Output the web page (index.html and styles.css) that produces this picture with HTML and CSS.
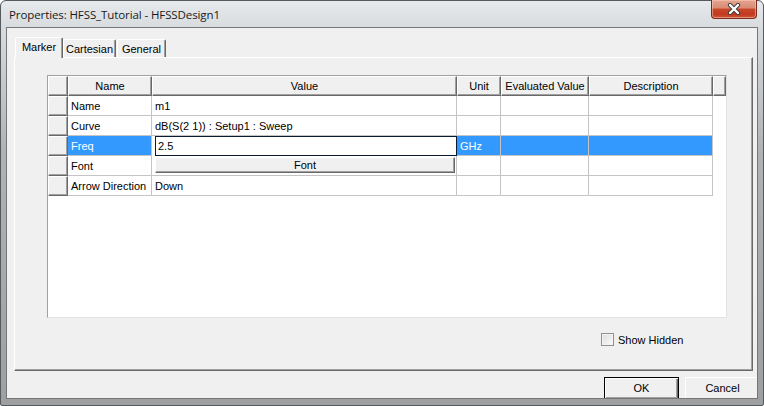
FILE: index.html
```html
<!DOCTYPE html>
<html>
<head>
<meta charset="utf-8">
<link rel="stylesheet" href="styles.css">
</head>
<body>
<div class="window">
  <div class="titlebar">
    <span class="title">Properties: HFSS_Tutorial - HFSSDesign1</span>
    <div class="close">
      <svg width="14" height="12" viewBox="0 0 14 12">
        <path d="M3 2 L11 10 M11 2 L3 10" stroke="#3a3a3a" stroke-width="4.2" stroke-linecap="round"/>
        <path d="M3 2 L11 10 M11 2 L3 10" stroke="#ffffff" stroke-width="2.4" stroke-linecap="round"/>
      </svg>
    </div>
  </div>
  <div class="client">
    <div class="tabs">
      <div class="tab active">Marker</div>
      <div class="tab t2">Cartesian</div>
      <div class="tab t3">General</div>
    </div>
    <div class="panel">
      <div class="grid">
        <div class="row head">
          <div class="hc c0"></div>
          <div class="hc c1">Name</div>
          <div class="hc c2">Value</div>
          <div class="hc c3">Unit</div>
          <div class="hc c4">Evaluated Value</div>
          <div class="hc c5">Description</div>
          <div class="hc cx"></div>
        </div>
        <div class="row">
          <div class="rh c0"></div>
          <div class="cell c1">Name</div>
          <div class="cell c2">m1</div>
          <div class="cell c3"></div>
          <div class="cell c4"></div>
          <div class="cell c5"></div>
        </div>
        <div class="row">
          <div class="rh c0"></div>
          <div class="cell c1">Curve</div>
          <div class="cell c2">dB(S(2 1)) : Setup1 : Sweep</div>
          <div class="cell c3"></div>
          <div class="cell c4"></div>
          <div class="cell c5"></div>
        </div>
        <div class="row sel">
          <div class="rh c0"></div>
          <div class="cell c1">Freq</div>
          <div class="cell c2 edit-cell"><div class="edit">2.5</div></div>
          <div class="cell c3">GHz</div>
          <div class="cell c4"></div>
          <div class="cell c5"></div>
        </div>
        <div class="row">
          <div class="rh c0"></div>
          <div class="cell c1">Font</div>
          <div class="cell c2 btn-cell"><div class="fontbtn">Font</div></div>
          <div class="cell c3"></div>
          <div class="cell c4"></div>
          <div class="cell c5"></div>
        </div>
        <div class="row">
          <div class="rh c0"></div>
          <div class="cell c1">Arrow Direction</div>
          <div class="cell c2">Down</div>
          <div class="cell c3"></div>
          <div class="cell c4"></div>
          <div class="cell c5"></div>
        </div>
      </div>
      <div class="options">
        <span class="checkbox"></span>
        <span class="cb-label">Show Hidden</span>
      </div>
    </div>
    <div class="buttons">
      <div class="btn default">OK</div>
      <div class="btn">Cancel</div>
    </div>
  </div>
</div>
</body>
</html>
```
FILE: styles.css
```css
html, body {
  margin: 0;
  padding: 0;
  width: 764px;
  height: 406px;
  overflow: hidden;
  background: #ffffff;
}

.window {
  width: 764px;
  height: 406px;
  box-sizing: border-box;
  border: 1px solid #555a5e;
  border-radius: 6px 6px 2px 2px;
  background: linear-gradient(#e7eaed 0px, #d8dbde 28px, #b0b2b4 150px, #9e9fa0 100%);
  padding: 0 6px 7px 6px;
  display: flex;
  flex-direction: column;
  font-family: "Liberation Sans", Arial, sans-serif;
  font-size: 11px;
  color: #000;
}

.titlebar {
  height: 27px;
  flex-shrink: 0;
  display: flex;
  align-items: flex-start;
  padding-left: 2px;
}

.title {
  font-family: "Open Sans", "Noto Sans", sans-serif;
  font-size: 11.5px;
  color: #1a1a1a;
  margin-top: 6px;
  letter-spacing: -0.1px;
}

.close {
  margin-left: auto;
  margin-top: -1px;
  width: 46px;
  height: 19px;
  box-sizing: border-box;
  border: 1px solid #7a2a1c;
  border-top: none;
  border-radius: 0 0 4px 4px;
  background: linear-gradient(#e4a592 0%, #d98a73 45%, #c7472a 50%, #c23a1f 80%, #d0573a 100%);
  box-shadow: inset 0 0 0 1px rgba(255, 210, 190, 0.5);
  display: flex;
  align-items: center;
  justify-content: center;
}

.client {
  flex: 1;
  background: #f0f0f0;
  box-shadow: 0 0 0 1px #767676;
  overflow: hidden;
  display: flex;
  flex-direction: column;
  padding: 9px 4px 0 7px;
}

.tabs {
  display: flex;
  align-items: flex-end;
  height: 20px;
  padding-left: 1px;
  flex-shrink: 0;
}

.tab {
  height: 18px;
  box-sizing: border-box;
  border-top: 1px solid #ffffff;
  border-left: 1px solid #ffffff;
  border-right: 1px solid #696969;
  box-shadow: inset -1px 0 #a0a0a0;
  border-radius: 2px 2px 0 0;
  display: flex;
  align-items: center;
  justify-content: center;
  background: #f0f0f0;
}

.tab.active {
  width: 48px;
  height: 21px;
  margin-bottom: -1px;
  position: relative;
  z-index: 1;
  padding-bottom: 2px;
}

.tab.t2 { width: 53px; }
.tab.t3 { width: 49px; margin-left: 1px; }

.panel {
  width: 739px;
  height: 314px;
  box-sizing: border-box;
  border-top: 1px solid #ffffff;
  border-left: 1px solid #ffffff;
  border-right: 1px solid #696969;
  border-bottom: 1px solid #696969;
  box-shadow: inset -1px -1px #a0a0a0;
  flex-shrink: 0;
  display: flex;
  flex-direction: column;
}

.grid {
  margin: 17px 0 0 32px;
  width: 680px;
  height: 243px;
  box-sizing: border-box;
  border-top: 1px solid #a0a0a0;
  border-left: 1px solid #a0a0a0;
  border-right: 1px solid #e3e3e3;
  border-bottom: 1px solid #e3e3e3;
  background: #ffffff;
}

.row {
  display: flex;
  height: 20px;
}

.c0 { width: 20px; }
.c1 { width: 84px; }
.c2 { width: 305px; }
.c3 { width: 44px; }
.c4 { width: 88px; }
.c5 { width: 124px; }
.cx { flex: 1; }

.hc, .rh {
  box-sizing: border-box;
  background: #f0f0f0;
  border-top: 1px solid #ffffff;
  border-left: 1px solid #ffffff;
  border-right: 1px solid #696969;
  border-bottom: 1px solid #696969;
  box-shadow: inset -1px -1px #a0a0a0;
  flex-shrink: 0;
}

.hc {
  display: flex;
  align-items: center;
  justify-content: center;
  padding-bottom: 1px;
}

.hc.cx { flex: 1; }

.cell {
  box-sizing: border-box;
  border-right: 1px solid #c4c4c4;
  border-bottom: 1px solid #c4c4c4;
  display: flex;
  align-items: center;
  padding-left: 3px;
  white-space: nowrap;
  overflow: hidden;
  flex-shrink: 0;
}

.row .c2.cell { padding-left: 3px; }

.sel .cell {
  background: #3399ff;
  color: #ffffff;
}

.sel .edit-cell {
  background: #ffffff;
  padding: 0;
  border: none;
  align-items: stretch;
}

.edit {
  flex: 1;
  border: 1px solid #0a1a30;
  background: #ffffff;
  color: #000;
  display: flex;
  align-items: center;
  padding-left: 2px;
}

.btn-cell {
  padding: 1px 1px 2px 1px;
  align-items: stretch;
}

.fontbtn {
  flex: 1;
  box-sizing: border-box;
  background: #f0f0f0;
  border-top: 1px solid #ffffff;
  border-left: 1px solid #ffffff;
  border-right: 1px solid #696969;
  border-bottom: 1px solid #696969;
  box-shadow: inset -1px -1px #a0a0a0;
  display: flex;
  align-items: center;
  justify-content: center;
}

.options {
  display: flex;
  align-items: center;
  margin: 15px 0 0 586px;
}

.checkbox {
  width: 13px;
  height: 13px;
  box-sizing: border-box;
  border: 1px solid #8e8f8f;
  background: linear-gradient(135deg, #dcdcdc, #fbfbfb);
  box-shadow: inset 0 0 0 1px #f4f4f4;
  margin-right: 4px;
}

.cb-label {
  font-size: 11px;
}

.buttons {
  display: flex;
  gap: 6px;
  margin: 6px 0 0 590px;
  flex-shrink: 0;
}

.btn {
  width: 75px;
  height: 23px;
  flex-shrink: 0;
  box-sizing: border-box;
  background: #f0f0f0;
  border-top: 1px solid #ffffff;
  border-left: 1px solid #ffffff;
  border-right: 1px solid #696969;
  border-bottom: 1px solid #696969;
  box-shadow: inset -1px -1px #a0a0a0;
  display: flex;
  align-items: center;
  justify-content: center;
  padding-bottom: 1px;
}

.btn.default {
  border: 1px solid #000000;
  box-shadow: inset 1px 1px #ffffff, inset -1px -1px #696969, inset -2px -2px #a0a0a0;
}
```
